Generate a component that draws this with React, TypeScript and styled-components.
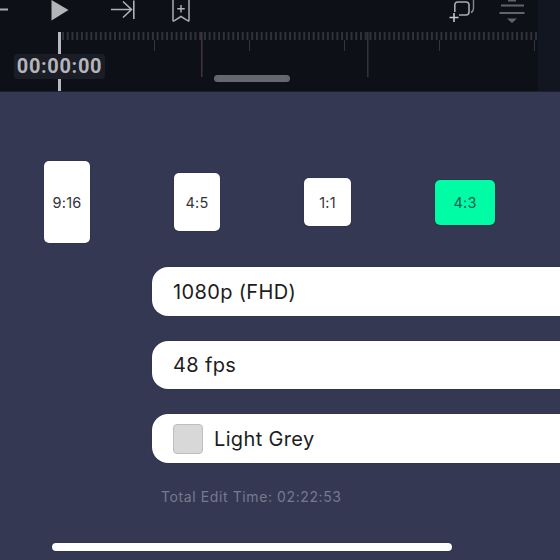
import React from "react";
import styled, { createGlobalStyle } from "styled-components";

const Global = createGlobalStyle`
  html, body { margin: 0; padding: 0; background: #343853; }
  #root { width: 560px; height: 560px; overflow: hidden; }
`;

const Screen = styled.div`
  width: 560px;
  height: 560px;
  overflow: hidden;
  display: flex;
  flex-direction: column;
  background: #343853;
  font-family: Inter, "Liberation Sans", sans-serif;
`;

const Header = styled.header`
  position: relative;
  flex: none;
  height: 92px;
  background: #0e1018;
  border-bottom: 1px solid #1d2030;
  box-sizing: border-box;
`;

const Strip = styled.div`
  position: absolute;
  top: 0;
  right: 0;
  bottom: 0;
  width: 22px;
  background: #121620;
`;

const Toolbar = styled.div`
  position: relative;
  display: flex;
  align-items: flex-start;
  height: 32px;
`;

const Tool = styled.svg<{ $left: number }>`
  flex: none;
  display: block;
  margin-left: ${(p) => p.$left}px;
`;

const Timeline = styled.svg`
  position: relative;
  display: block;
`;

const Timecode = styled.div`
  position: absolute;
  left: 14px;
  top: 54px;
  width: 91px;
  height: 25px;
  border-radius: 3px;
  background: #1a1c26;
  color: #b4b5ba;
  font-family: Roboto, "Liberation Sans", sans-serif;
  font-size: 20px;
  font-weight: 700;
  line-height: 25px;
  text-align: center;
  letter-spacing: 0.65px;
  white-space: nowrap;
`;

const Handle = styled.div`
  position: absolute;
  left: 214px;
  top: 75px;
  width: 76px;
  height: 7px;
  border-radius: 4px;
  background: #65666e;
`;

const Ratios = styled.div`
  flex: none;
  display: flex;
  align-items: center;
  gap: 84px;
  margin: 69px 0 24px 44px;
`;

const Ratio = styled.div<{ $w: number; $h: number; $active?: boolean }>`
  flex: none;
  box-sizing: border-box;
  width: ${(p) => p.$w}px;
  height: ${(p) => p.$h}px;
  display: flex;
  align-items: center;
  justify-content: center;
  border-radius: 5px;
  box-shadow: 0 0 1px #14173a;
  background: ${(p) => (p.$active ? "#00fda6" : "#ffffff")};
  color: ${(p) => (p.$active ? "#1a5c50" : "#34343a")};
  font-size: 14.5px;
  letter-spacing: 0.2px;
`;

const Rows = styled.div`
  flex: none;
  display: flex;
  flex-direction: column;
  gap: 25px;
  margin-left: 152px;
  width: 440px;
`;

const Row = styled.div`
  box-sizing: border-box;
  height: 48.5px;
  display: flex;
  align-items: center;
  gap: 11px;
  padding: 1px 0 0 21px;
  border-radius: 16px;
  background: #ffffff;
  box-shadow: 0 0 1px #14173a;
  color: #1c1c22;
  font-size: 20px;
  letter-spacing: 0.35px;
`;

const Swatch = styled.span`
  flex: none;
  width: 30px;
  height: 30px;
  box-sizing: border-box;
  border-radius: 4px;
  background: #d8d8d8;
  border: 1px solid #bdbdbd;
`;

const Total = styled.div`
  flex: none;
  margin: 25px 0 0 161px;
  height: 18px;
  line-height: 18px;
  color: #777a8f;
  font-size: 14px;
  letter-spacing: 0.6px;
`;

const HomeBar = styled.div`
  flex: none;
  margin: 37px 0 0 52px;
  width: 400px;
  height: 8px;
  border-radius: 4px;
  background: #ffffff;
  box-shadow: 0 0 1px #14173a;
`;

const minorTicks = Array.from({ length: 101 }, (_, i) => 62 + i * 4.73);
const mediumTicks = [154, 249, 344, 439, 534];

export default function App() {
  return (
    <Screen>
      <Global />
      <Header>
        <Strip />
        <Toolbar>
          <Tool $left={0} width="8" height="20" viewBox="0 0 8 20">
            <path d="M0 9.5H8" stroke="#a9aaae" strokeWidth="2" />
          </Tool>
          <Tool $left={43} width="18" height="21" viewBox="0 0 18 21">
            <path d="M0.5 0L17.5 10L0.5 20.5Z" fill="#b4b5b9" />
          </Tool>
          <Tool $left={42} width="24" height="20" viewBox="0 0 24 20">
            <path d="M0 9.5H20M12 1.5L20.5 9.5L12 17.5M22.8 0.5V19" fill="none" stroke="#b0b1b5" strokeWidth="1.6" />
          </Tool>
          <Tool $left={36} width="20" height="23" viewBox="0 0 20 23">
            <path d="M2 -2V20.5Q2 21.4 3 20.8L10 16.5L17 20.8Q18 21.4 18 20.5V-2" fill="none" stroke="#a9aaae" strokeWidth="1.5" />
            <path d="M10 5V12.5M6.3 8.8H13.7" stroke="#b4b5b9" strokeWidth="1.4" />
          </Tool>
          <Tool $left={258} width="28" height="28" viewBox="0 0 28 28">
            <path d="M5.8 12V5Q5.8 2 9 2H17Q20 2 20 5V12Q20 15 17 15H10" fill="none" stroke="#a9aaae" strokeWidth="1.6" />
            <path d="M24.5 0V8Q24.5 11.5 22 12.5" fill="none" stroke="#85868c" strokeWidth="1.4" />
            <path d="M0.5 17.5H9.5M5 13V22" stroke="#c8c9cc" strokeWidth="1.6" />
          </Tool>
          <Tool $left={22} width="26" height="24" viewBox="0 0 26 24">
            <path d="M9 0.5H17M2 5.5H25M0.5 13H25.5" stroke="#62636b" strokeWidth="2" />
            <path d="M8 18.5H18L13 23Z" fill="#62636b" />
          </Tool>
        </Toolbar>
        <Timeline width="560" height="59" viewBox="0 32 560 59">
          {minorTicks.map((x) => (
            <rect key={x} x={x} y={32} width="2" height="8" fill="#30313a" />
          ))}
          {mediumTicks.map((x) => (
            <rect key={x} x={x} y={40} width="1" height="11" fill="#34353d" />
          ))}
          <rect x="201" y="32" width="1.5" height="45" fill="#46303f" />
          <rect x="367" y="32" width="1.5" height="45" fill="#35323c" />
          <rect x="58" y="32" width="3" height="59" fill="#b8b9bd" />
        </Timeline>
        <Timecode>00:00:00</Timecode>
        <Handle />
      </Header>
      <Ratios>
        <Ratio $w={46} $h={82}>9:16</Ratio>
        <Ratio $w={46} $h={58}>4:5</Ratio>
        <Ratio $w={47} $h={48}>1:1</Ratio>
        <Ratio $w={60} $h={45} $active>4:3</Ratio>
      </Ratios>
      <Rows>
        <Row>1080p (FHD)</Row>
        <Row>48 fps</Row>
        <Row>
          <Swatch />
          Light Grey
        </Row>
      </Rows>
      <Total>Total Edit Time: 02:22:53</Total>
      <HomeBar />
    </Screen>
  );
}
